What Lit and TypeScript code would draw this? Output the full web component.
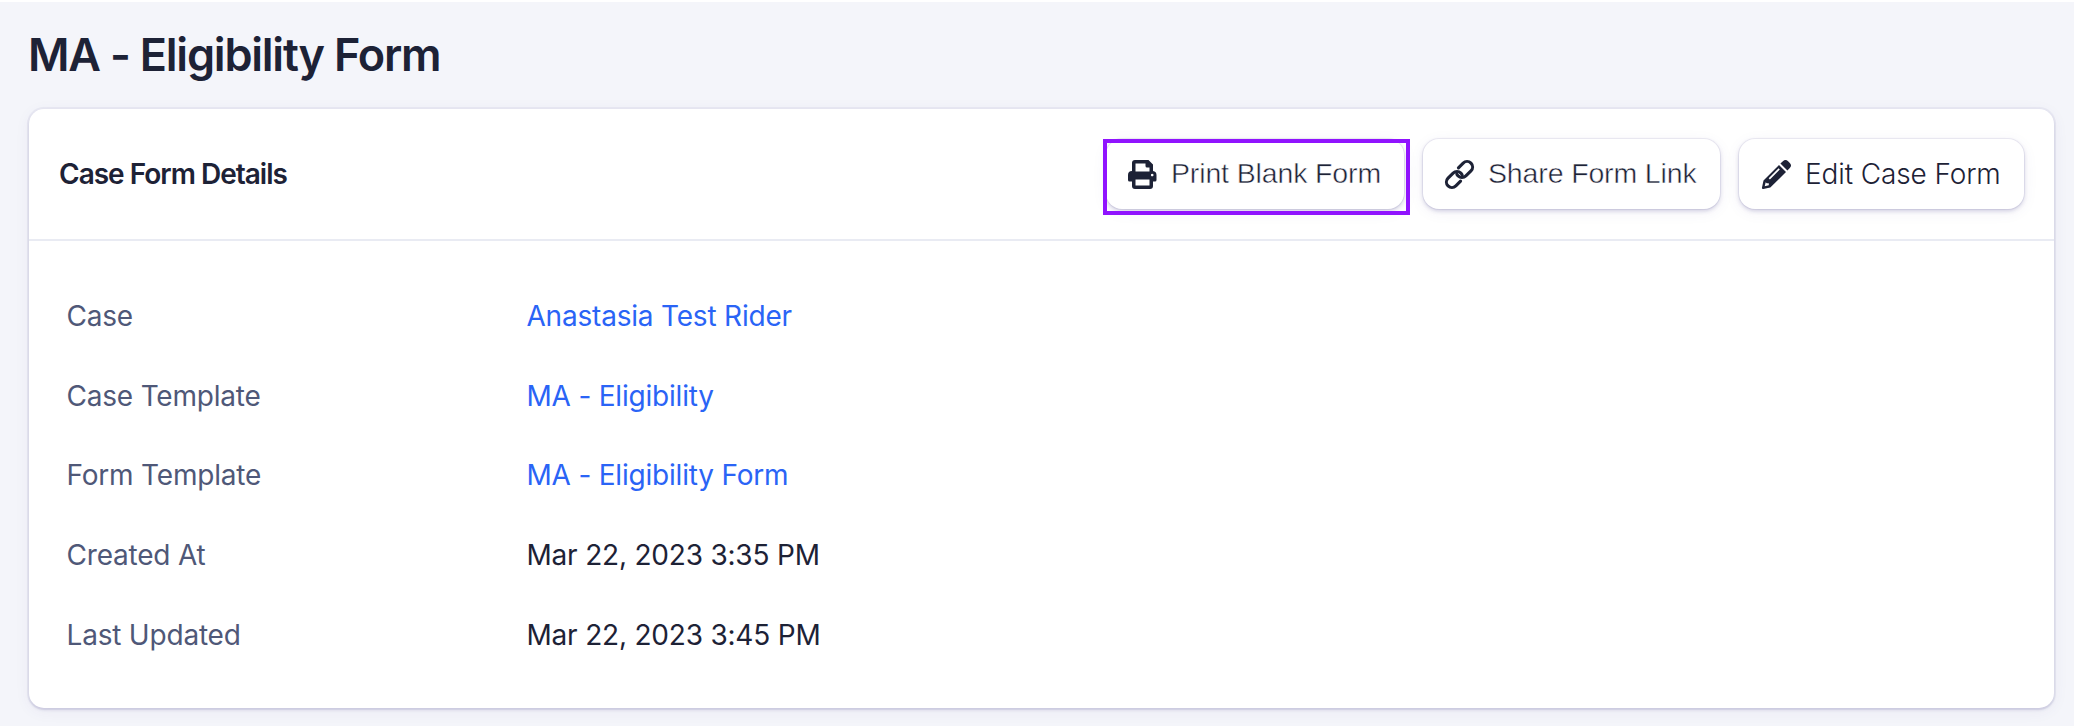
import { LitElement, html, css, svg } from "lit";
import { customElement } from "lit/decorators.js";

const icons = {
  print: svg`<path fill-rule="evenodd" d="M4 11V3a3 3 0 0 1 3-3h13.500L25 4.500V11a4 4 0 0 1 3.500 4v5a1.500 1.500 0 0 1-1.500 1.500h-2V26a3 3 0 0 1-3 3H7a3 3 0 0 1-3-3v-4.500H1.500A1.500 1.500 0 0 1 0 20v-5a4 4 0 0 1 4-4zM7.500 3.500v8h14V7.500h-2.500a1.500 1.500 0 0 1-1.500-1.500V3.500zM7.500 19.500v6h14v-6zM24.200 13.700a1.300 1.300 0 1 0 .01 0z"/>`,
  link: svg`<g fill="none" stroke="currentColor" stroke-width="3.100" stroke-linecap="round" transform="rotate(-45 14.500 14.500)"><path d="M10.500 20H3.800a5.500 5.500 0 0 1 0-11H11a5.500 5.500 0 0 1 5.500 5.500q0 1.500-.700 2.600"/><path d="M18.500 9H25.200a5.500 5.500 0 0 1 0 11H18a5.500 5.500 0 0 1-5.500-5.500q0-1.500.700-2.600"/></g>`,
  pencil: svg`<path fill-rule="evenodd" d="M17 5 24 12 8.300 27.500 1.400 29a1.200 1.200 0 0 1-1.400-1.400L1.500 20.500zM3.700 22.200l-1 4.100 4.100-1V23.200H4.700zM16.600 8.300 6.700 18.200l1.200 1.200L17.800 9.500zM18.400 3.600 20.900 1.200a3.800 3.800 0 0 1 5.200 0l1.700 1.700a3.800 3.800 0 0 1 0 5.200L25.400 10.600z"/>`,
};

@customElement("app-root")
export class AppRoot extends LitElement {
  static styles = css`
    :host { display: block; box-sizing: border-box; height: 726px; overflow: hidden; background: #f4f5fa; border-top: 2px solid #fff; padding: 0 20px 0 29px; font-family: Inter, sans-serif; color: #1d2236; }
    .title { margin: 0 0 0 -1px; height: 107px; padding-top: 24px; box-sizing: border-box; font-size: 45px; line-height: 58px; font-weight: 620; letter-spacing: -1.22px; white-space: nowrap; }
    .card { height: 599px; background: #fff; border-radius: 15px; box-shadow: 0 0 0 2px rgba(60,50,130,.055), 0 2px 3px rgba(60,50,130,.15), 0 3px 16px rgba(60,50,130,.06); }
    .head { box-sizing: border-box; height: 132px; border-bottom: 2px solid #e9ebf3; display: flex; align-items: center; justify-content: space-between; padding: 0 30px; }
    .heading { margin: 0; font-size: 28px; font-weight: 600; letter-spacing: -1px; }
    .actions { display: flex; gap: 19px; }
    .btn { position: relative; box-sizing: border-box; height: 70px; display: flex; align-items: center; gap: 15px; border: 0; border-radius: 16px; background: #fff; padding: 0 0 0 22px; color: #1d2236; font: 300 28px/34px Inter, sans-serif; letter-spacing: -.12px; white-space: nowrap; box-shadow: 0 0 0 1px rgba(60,50,130,.07), 0 2px 4px rgba(60,50,130,.22), 0 3px 16px rgba(60,50,130,.06); }
    .print { width: 298px; }
    .share { width: 297px; }
    .edit { width: 285px; padding-left: 23px; gap: 14px; }
    .alt { font: 400 28.500px/34px "Liberation Sans", sans-serif; letter-spacing: -.14px; -webkit-text-stroke: .5px #fff; gap: 14px; }
    .alt span { padding-bottom: 2px; }
    .icon { width: 29px; height: 29px; overflow: visible; fill: currentColor; flex: none; }
    .ring { position: absolute; left: -3px; top: 0; width: 307px; height: 76px; box-sizing: border-box; border: 4px solid #9013fe; pointer-events: none; }
    .rows { margin: 0; padding: 35px 37.500px; }
    .row { display: grid; grid-template-columns: 460px 1fr; height: 79.800px; align-items: center; font-size: 28px; line-height: 40px; letter-spacing: -.2px; font-weight: 420; }
    .label { color: #4f5878; }
    .value { margin: 0; }
    .link { color: #2a64f6; text-decoration: none; }
  `;
  rows = [
    ["Case", "Anastasia Test Rider", true],
    ["Case Template", "MA - Eligibility", true],
    ["Form Template", "MA - Eligibility Form", true],
    ["Created At", "Mar 22, 2023 3:35 PM", false],
    ["Last Updated", "Mar 22, 2023 3:45 PM", false],
  ] as const;
  icon(name: keyof typeof icons) {
    return html`<svg class="icon" viewBox="0 0 29 29">${icons[name]}</svg>`;
  }
  render() {
    return html`
      <h1 class="title">MA - Eligibility Form</h1>
      <section class="card">
        <header class="head">
          <h2 class="heading">Case Form Details</h2>
          <div class="actions">
            <button class="btn alt print">${this.icon("print")}<span>Print Blank Form</span><i class="ring"></i></button>
            <button class="btn alt share">${this.icon("link")}<span>Share Form Link</span></button>
            <button class="btn edit">${this.icon("pencil")}<span>Edit Case Form</span></button>
          </div>
        </header>
        <dl class="rows">
          ${this.rows.map(([l, v, link]) => html`<div class="row"><dt class="label">${l}</dt><dd class="value">${link ? html`<a class="link" href="#">${v}</a>` : v}</dd></div>`)}
        </dl>
      </section>`;
  }
}
